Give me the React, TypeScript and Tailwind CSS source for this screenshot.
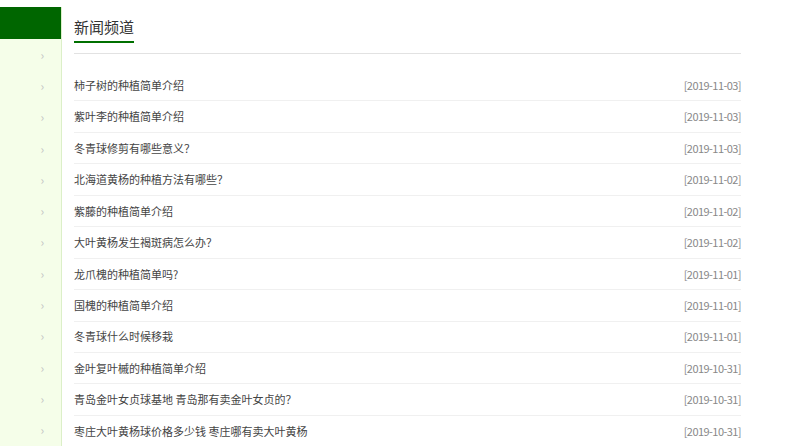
const news = [
  { title: '柿子树的种植简单介绍', date: '2019-11-03' },
  { title: '紫叶李的种植简单介绍', date: '2019-11-03' },
  { title: '冬青球修剪有哪些意义？', date: '2019-11-03' },
  { title: '北海道黄杨的种植方法有哪些？', date: '2019-11-02' },
  { title: '紫藤的种植简单介绍', date: '2019-11-02' },
  { title: '大叶黄杨发生褐斑病怎么办？', date: '2019-11-02' },
  { title: '龙爪槐的种植简单吗?', date: '2019-11-01' },
  { title: '国槐的种植简单介绍', date: '2019-11-01' },
  { title: '冬青球什么时候移栽', date: '2019-11-01' },
  { title: '金叶复叶槭的种植简单介绍', date: '2019-10-31' },
  { title: '青岛金叶女贞球基地 青岛那有卖金叶女贞的？', date: '2019-10-31' },
  { title: '枣庄大叶黄杨球价格多少钱 枣庄哪有卖大叶黄杨', date: '2019-10-31' },
];

const sideItems = Array.from({ length: 13 }, (_, i) => i);

export default function App() {
  return (
    <div
      className="flex h-[446px] w-[798px] overflow-hidden bg-white"
      style={{ fontFamily: '"Noto Sans CJK SC", "Noto Sans", sans-serif' }}
    >
      <aside className="mt-[7px] w-[62px] shrink-0 border-r border-[#dcefc8] bg-[#f5fee9]">
        <div className="h-[32px] bg-[#006600]" />
        <ul>
          {sideItems.map((i) => (
            <li
              key={i}
              className="flex h-[31.3px] items-center justify-end pr-[17px] text-[12px] leading-none text-[#c4c4c4]"
            >
              ›
            </li>
          ))}
        </ul>
      </aside>

      <main className="ml-[12px] w-[667px]">
        <div className="border-b border-[#e2e2e2] pt-[14px] pb-[10px]">
          <span className="inline-block border-b-2 border-[#007000] pb-[3px] text-[15px] leading-[22px] text-[#333]">
            新闻频道
          </span>
        </div>
        <ul className="mt-[16px]">
          {news.map((n, i) => (
            <li
              key={i}
              className="flex h-[31.45px] items-center justify-between border-b border-[#f0f0f0] text-[11px] text-[#444]"
            >
              <span>{n.title}</span>
              <span className="tracking-[-0.55px] text-[#888]">[{n.date}]</span>
            </li>
          ))}
        </ul>
      </main>
    </div>
  );
}
